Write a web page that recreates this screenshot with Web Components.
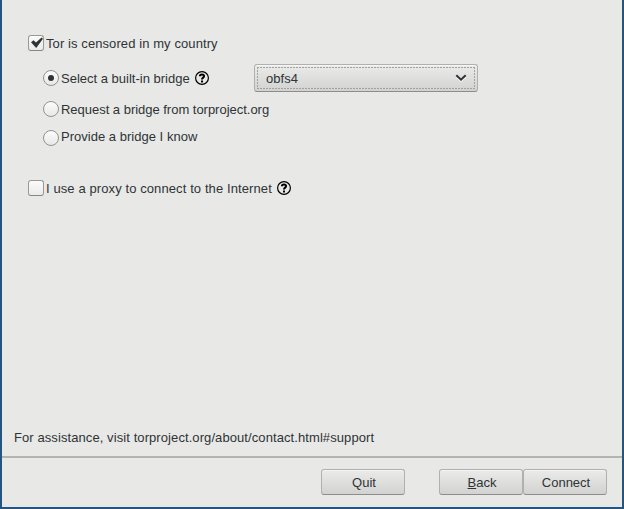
<!DOCTYPE html>
<html lang="en">
<head>
<meta charset="utf-8">
<title>Network Settings</title>
<style>
html, body { margin: 0; height: 100%; overflow: hidden; }
body { font: 13px/16px "Liberation Sans", Arial, sans-serif; color: #2e3436; }
</style>
</head>
<body>
<network-wizard></network-wizard>
<script>
const define = (name, html) => {
  const template = document.createElement('template');
  template.innerHTML = html;
  customElements.define(name, class extends HTMLElement {
    constructor() {
      super();
      this.attachShadow({ mode: 'open' }).append(template.content.cloneNode(true));
    }
  });
};

define('help-icon', `
<style>
:host { display: block; width: 14px; height: 14px; flex: none; }
svg { display: block; }
</style>
<svg width="14" height="14" viewBox="0 0 14 14" fill="none" stroke="#000">
  <circle cx="7" cy="7" r="6.4" stroke-width="1.2"/>
  <path d="M4.9 5.3C4.9 2.9 9.1 2.9 9.1 5.1C9.1 6.7 7 6.6 7 8.6" stroke-width="2"/>
  <path d="M7 9.5V11.5" stroke-width="2"/>
</svg>`);

define('check-option', `
<style>
:host { display: flex; align-items: center; height: 16px; white-space: nowrap; }
.box { box-sizing: border-box; width: 16px; height: 16px; flex: none; border: 1px solid #999a97; border-bottom-color: #868784; border-radius: 3px; background: linear-gradient(#fbfbfb, #ebebea); margin-right: 2px; }
.text { padding-top: 2px; }
svg { display: none; margin: -1px; }
:host([checked]) svg { display: block; }
::slotted(help-icon) { margin-left: 5px; }
</style>
<span class="box"><svg width="16" height="16" viewBox="0 0 16 16"><path d="M3 7.2L5.5 5.2L8 7.6L13.6 2.4L15 3.8L8.2 13Z" fill="#2e3436"/></svg></span><span class="text"><slot></slot></span><slot name="help"></slot>`);

define('radio-option', `
<style>
:host { display: flex; align-items: center; height: 16px; white-space: nowrap; }
.dial { box-sizing: border-box; width: 16px; height: 16px; flex: none; border: 1px solid #939491; border-radius: 50%; background: linear-gradient(#fcfcfc, #e8e8e7); margin-right: 2px; display: grid; place-items: center; transform: translateY(var(--dial-shift, 0)); }
:host([checked]) .dial::before { content: ""; width: 6px; height: 6px; border-radius: 50%; background: #2e3436; }
.text { padding-top: var(--text-drop, 2px); }
::slotted(help-icon) { margin-left: 5px; }
</style>
<span class="dial"></span><span class="text"><slot></slot></span><slot name="help"></slot>`);

define('select-menu', `
<style>
:host { box-sizing: border-box; display: block; width: 224px; height: 28px; padding: 2px; border: 1px solid #b0b1ae; border-bottom-color: #8d8e8b; border-radius: 3px; background: linear-gradient(#ebebea, #d2d2d0); box-shadow: inset 0 1px #f5f5f4; }
.focus {
  --dash: #a2a3a0 0 2px, transparent 2px 3px;
  box-sizing: border-box; height: 22px; display: flex; align-items: center; justify-content: space-between; padding: 0 8px 0 9px;
  background:
    repeating-linear-gradient(90deg, var(--dash)) 0 0 / 100% 1px no-repeat,
    repeating-linear-gradient(90deg, var(--dash)) 0 100% / 100% 1px no-repeat,
    repeating-linear-gradient(180deg, var(--dash)) 0 0 / 1px 100% no-repeat,
    repeating-linear-gradient(180deg, var(--dash)) 100% 0 / 1px 100% no-repeat;
}
.text { padding-top: 2px; letter-spacing: .05px; }
svg { display: block; }
</style>
<div class="focus"><span class="text"><slot></slot></span><svg width="12" height="8" viewBox="0 0 12 8"><path d="M1.5 2.5L6 6.8L10.5 2.5" stroke="#f8f8f7" stroke-width="2" fill="none"/><path d="M1.3 1.2L6 5.7L10.7 1.2" stroke="#2e3436" stroke-width="2" fill="none"/></svg></div>`);

define('push-button', `
<style>
:host { box-sizing: border-box; display: flex; align-items: center; justify-content: center; width: 84px; height: 26px; padding-top: 1px; padding-left: 2px; border: 1px solid #b0b1ae; border-bottom-color: #8d8e8b; border-radius: 3px; background: linear-gradient(#ebebea, #d2d2d0); box-shadow: inset 0 1px #f5f5f4; }
::slotted(u) { text-underline-offset: 1px; text-decoration-thickness: 1px; }
</style>
<span><slot></slot></span>`);

define('network-wizard', `
<style>
:host { box-sizing: border-box; display: flex; flex-direction: column; width: 624px; height: 509px; border: solid #24557e; border-width: 0 2px 2px; background: #e8e8e6; }
main { flex: 1; display: flex; flex-direction: column; padding: 35px 12px 0; }
.options { padding: 0 14px; }
.censored { letter-spacing: .09px; }
.bridges { padding-left: 15px; }
.row { display: flex; align-items: center; height: 28px; margin-top: 13px; }
.row radio-option { width: 211px; }
.request { margin-top: 9px; letter-spacing: -.02px; }
.provide { margin-top: 12px; letter-spacing: .02px; --dial-shift: 1px; --text-drop: 0px; }
.proxy { margin-top: 35px; letter-spacing: .1px; }
.assist { margin: auto 0 10px; letter-spacing: .085px; }
footer { display: flex; justify-content: flex-end; box-sizing: border-box; height: 51px; padding: 11px 15px 0 0; border-top: 2px solid #b3b3b1; }
.quit { margin-right: 34px; }
</style>
<main>
  <div class="options">
    <check-option class="censored" checked>Tor is censored in my country</check-option>
    <div class="bridges">
      <div class="row"><radio-option checked>Select a built-in bridge<help-icon slot="help"></help-icon></radio-option><select-menu>obfs4</select-menu></div>
      <radio-option class="request">Request a bridge from torproject.org</radio-option>
      <radio-option class="provide">Provide a bridge I know</radio-option>
    </div>
    <check-option class="proxy">I use a proxy to connect to the Internet<help-icon slot="help"></help-icon></check-option>
  </div>
  <div class="assist">For assistance, visit torproject.org/about/contact.html#support</div>
</main>
<footer><push-button class="quit">Quit</push-button><push-button><u>B</u>ack</push-button><push-button>Connect</push-button></footer>`);
</script>
</body>
</html>
